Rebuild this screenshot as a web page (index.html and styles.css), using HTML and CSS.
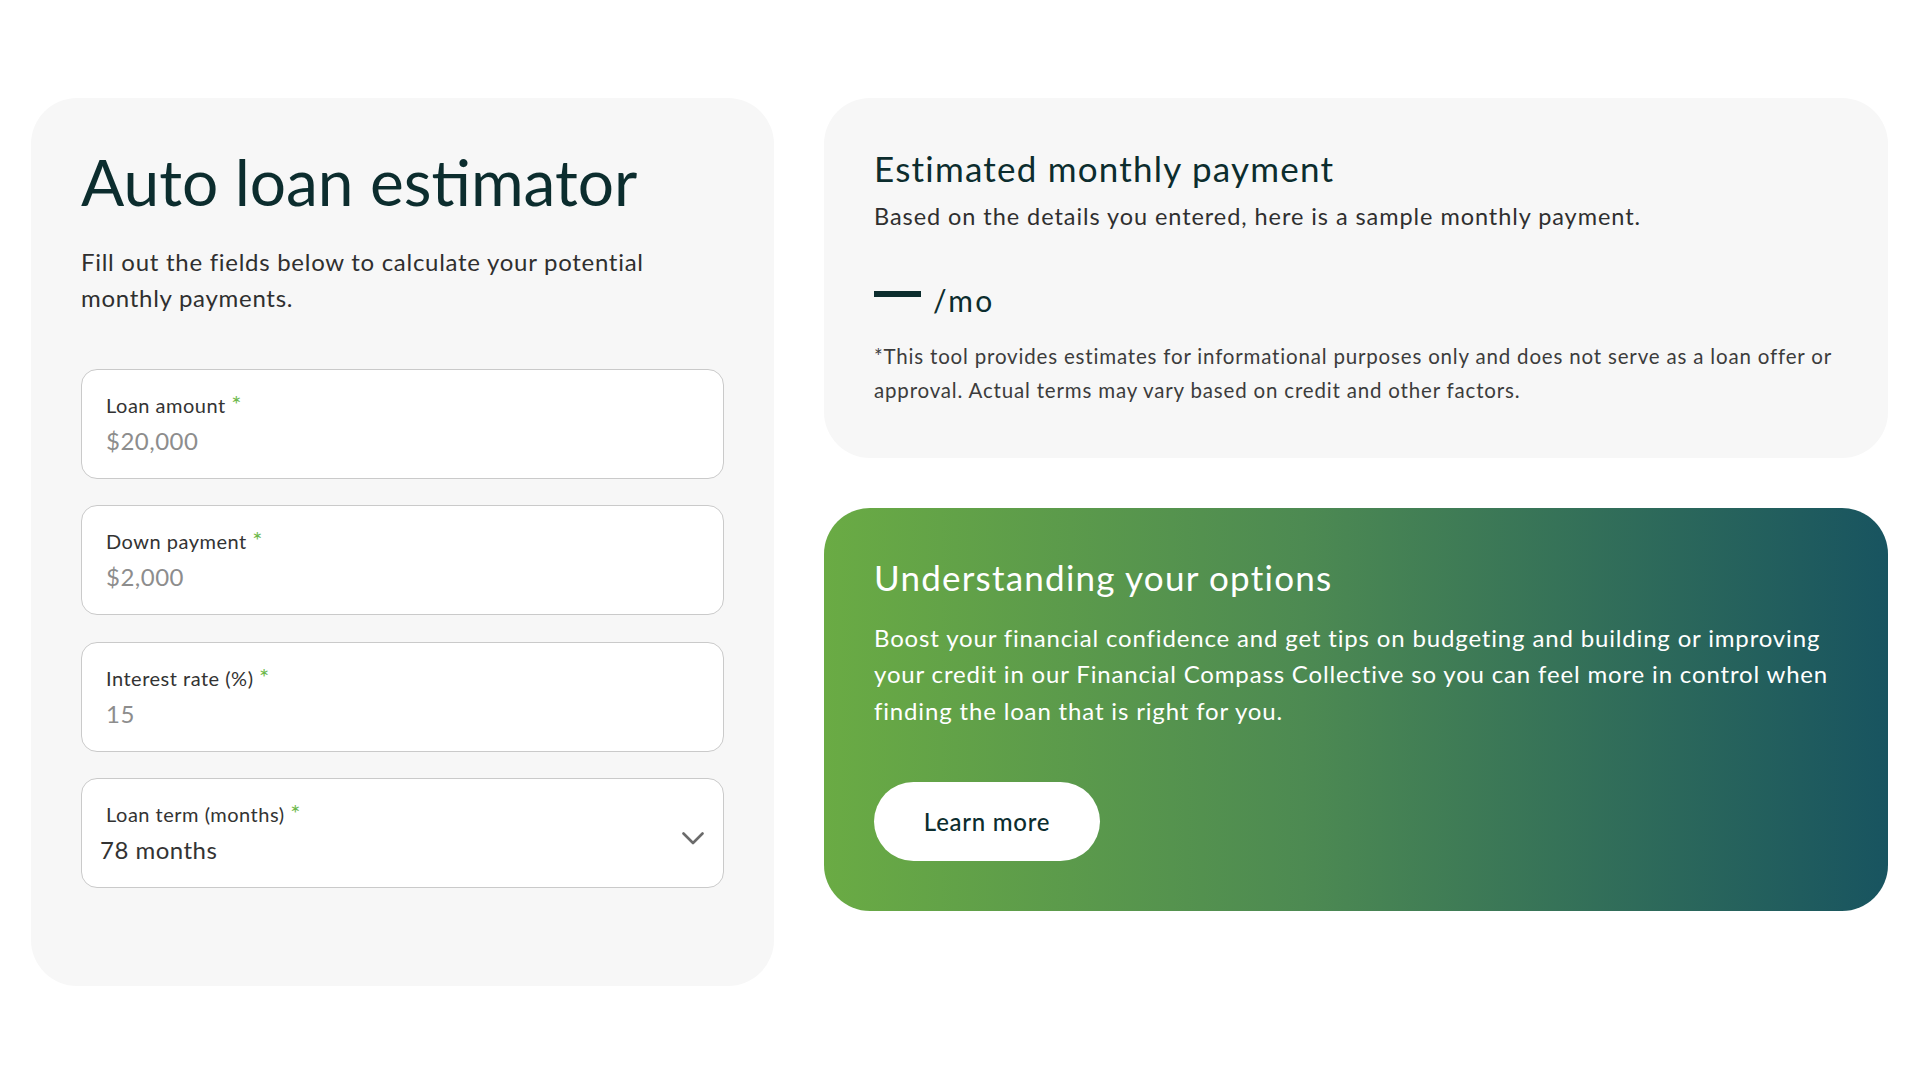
FILE: index.html
```html
<!DOCTYPE html>
<html>
    <head>
        <title>Auto loan estimator</title>
        <link rel="stylesheet" href="styles.css">
    </head>
    <body>
        <div class="page">
            <div class="calc-card">
                <h1 class="calc-title">Auto loan estimator</h1>
                <p class="calc-intro">Fill out the fields below to calculate your potential monthly payments.</p>
                <form class="calc-form">
                    <label class="field">
                        <span class="field-label">Loan amount <span class="req">*</span></span>
                        <input class="field-input" type="text" placeholder="$20,000">
                    </label>
                    <label class="field">
                        <span class="field-label">Down payment <span class="req">*</span></span>
                        <input class="field-input" type="text" placeholder="$2,000">
                    </label>
                    <label class="field">
                        <span class="field-label">Interest rate (%) <span class="req">*</span></span>
                        <input class="field-input" type="text" placeholder="15">
                    </label>
                    <label class="field field-select">
                        <span class="field-label">Loan term (months) <span class="req">*</span></span>
                        <select class="field-input">
                            <option>78 months</option>
                            <option>72 months</option>
                            <option>60 months</option>
                            <option>48 months</option>
                            <option>36 months</option>
                        </select>
                        <svg class="chevron" width="22" height="13" viewBox="0 0 22 13">
                            <path d="M1.5 1.5 L11 11 L20.5 1.5" fill="none" stroke="#6b6b6b" stroke-width="2.6" stroke-linecap="round" stroke-linejoin="round"/>
                        </svg>
                    </label>
                </form>
            </div>
            <div class="side">
                <div class="result-card">
                    <h2 class="card-title">Estimated monthly payment</h2>
                    <p class="result-sub">Based on the details you entered, here is a sample monthly payment.</p>
                    <div class="amount"><span class="amount-empty"></span> /mo</div>
                    <p class="disclaimer">*This tool provides estimates for informational purposes only and does not serve as a loan offer or approval. Actual terms may vary based on credit and other factors.</p>
                </div>
                <div class="promo-card">
                    <h2 class="card-title">Understanding your options</h2>
                    <p class="promo-text">Boost your financial confidence and get tips on budgeting and building or improving your credit in our Financial Compass Collective so you can feel more in control when finding the loan that is right for you.</p>
                    <a class="btn" href="#">Learn more</a>
                </div>
            </div>
        </div>
    </body>
</html>
```
FILE: styles.css
```css
html, body {
    margin: 0;
    padding: 0;
    background: #fff;
    font-family: 'Lato', 'Open Sans', sans-serif;
    color: #0c2d2e;
}
.page {
    display: flex;
    gap: 50px;
    padding: 98px 32px 0 31px;
    align-items: flex-start;
}
.calc-card {
    width: 743px;
    box-sizing: border-box;
    background: #f7f7f7;
    border-radius: 46px;
    padding: 46px 50px 98px;
}
.calc-title {
    margin: 0;
    font-size: 64px;
    font-weight: 400;
    line-height: 1.2;
}
.calc-intro {
    margin: 23px 0 0;
    font-size: 24px;
    line-height: 36.5px;
    letter-spacing: 0.03em;
    color: #2f2f2f;
    max-width: 590px;
}
.calc-form {
    margin-top: 52px;
    display: flex;
    flex-direction: column;
    gap: 26.5px;
}
.field {
    position: relative;
    display: flex;
    flex-direction: column;
    gap: 9px;
    height: 110px;
    box-sizing: border-box;
    padding: 23px 24px 22px;
    background: #fff;
    border: 1.5px solid #cacaca;
    border-radius: 16px;
}
.field-label {
    font-size: 20px;
    line-height: 24px;
    letter-spacing: 0.025em;
    color: #333;
}
.req {
    color: #6cb84a;
    font-size: 24px;
    line-height: 0;
}
.field-input {
    border: none;
    outline: none;
    background: none;
    padding: 0;
    margin: 0;
    height: 30px;
    font-family: inherit;
    font-size: 24px;
    line-height: 30px;
    letter-spacing: 0.02em;
    color: #333;
}
.field-input::placeholder {
    color: #8d8d8d;
}
.field-select select {
    appearance: none;
    -webkit-appearance: none;
    margin-left: -6px;
    cursor: pointer;
}
.chevron {
    position: absolute;
    right: 19px;
    top: 53px;
}
.side {
    flex: 1;
    display: flex;
    flex-direction: column;
    gap: 50px;
}
.result-card {
    background: #f7f7f7;
    border-radius: 46px;
    padding: 49px 50px 51px;
}
.card-title {
    margin: 0;
    font-size: 35px;
    font-weight: 400;
    line-height: 1.2;
    letter-spacing: 0.035em;
}
.result-sub {
    margin: 11px 0 0;
    font-size: 23.5px;
    line-height: 33px;
    letter-spacing: 0.04em;
    color: #2f2f2f;
}
.amount {
    margin-top: 49px;
    font-size: 30px;
    line-height: 36px;
    letter-spacing: 0.08em;
}
.amount-empty {
    display: inline-block;
    width: 47px;
    height: 6px;
    background: #0c2d2e;
    vertical-align: 15px;
    margin-right: 2px;
}
.disclaimer {
    margin: 20.5px 0 0;
    font-size: 20.5px;
    line-height: 34px;
    letter-spacing: 0.04em;
    color: #3c3c3c;
}
.promo-card {
    border-radius: 46px;
    padding: 48px 50px 50px;
    color: #fff;
    background: linear-gradient(90deg, #6aab44 0%, #4d8a52 45%, #185460 100%);
}
.promo-text {
    margin: 22px 0 0;
    font-size: 24px;
    line-height: 36.5px;
    letter-spacing: 0.035em;
}
.btn {
    display: inline-block;
    margin-top: 53px;
    width: 226px;
    height: 79px;
    box-sizing: border-box;
    line-height: 79px;
    text-align: center;
    border-radius: 40px;
    background: #fff;
    color: #0c2d2e;
    font-size: 24px;
    font-weight: 500;
    letter-spacing: 0.03em;
    text-decoration: none;
}
```
